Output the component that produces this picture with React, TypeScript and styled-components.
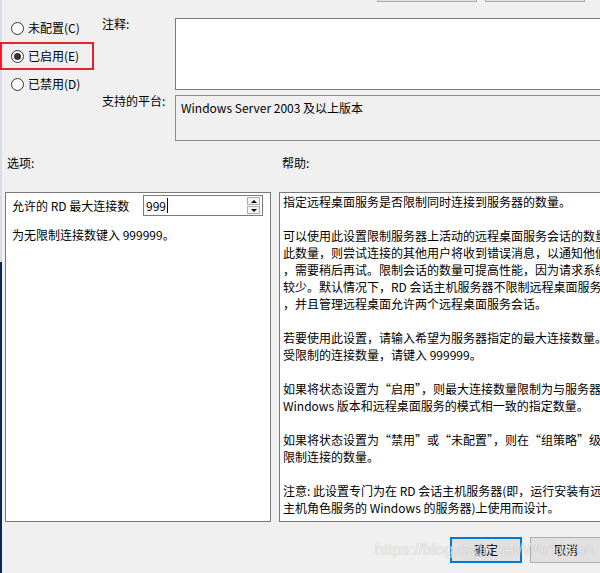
import React from "react";
import styled, { createGlobalStyle, css } from "styled-components";

//////////////////////////////////////////////////////////////////////////////

const GlobalStyle = createGlobalStyle`
  html, body {
    margin: 0;
    padding: 0;
    overflow: hidden;
    background: #f0f0f0;
  }
  body {
    font-family: "Noto Sans CJK SC", "Noto Sans", sans-serif;
    font-size: 12px;
    color: #000;
  }
`;

const SPage = styled.div`
  position: relative;
  width: 600px;
  height: 573px;
  overflow: hidden;
  display: flex;
  flex-direction: column;
  background: linear-gradient(
        to bottom,
        #d9dde3 0,
        #d9dde3 262px,
        #0c2849 262px
      )
      left top / 2px 100% no-repeat,
    #f0f0f0;
`;

const STopBar = styled.div`
  height: 2px;
  flex-shrink: 0;
  display: flex;
  justify-content: flex-end;
  align-items: flex-end;
  gap: 8px;
  padding-right: 15px;
  overflow: hidden;
`;

const STopButton = styled.div`
  width: 100px;
  height: 22px;
  flex-shrink: 0;
  box-sizing: border-box;
  border: 1px solid #adadad;
  background: #e1e1e1;
`;

const SUpper = styled.div`
  display: flex;
  align-items: flex-start;
  flex-shrink: 0;
`;

const SRadioGroup = styled.div`
  width: 94px;
  margin-top: 12px;
  flex-shrink: 0;
  display: flex;
  flex-direction: column;
`;

interface IRowProps {
  highlighted?: boolean;
}

const SRadioRow = styled.div<IRowProps>`
  height: 28px;
  box-sizing: border-box;
  border: 2px solid transparent;
  padding-left: 9px;
  display: flex;
  align-items: center;
  gap: 4px;
  line-height: 14px;

  ${(props) =>
    props.highlighted &&
    css`
      border-color: #e8202a;
    `}
`;

interface ICircleProps {
  checked?: boolean;
}

const SRadioCircle = styled.span<ICircleProps>`
  width: 13px;
  height: 13px;
  box-sizing: border-box;
  border: 1px solid #333;
  border-radius: 50%;
  background: #fff;
  display: flex;
  align-items: center;
  justify-content: center;

  ${(props) =>
    props.checked &&
    css`
      &::after {
        content: "";
        width: 7px;
        height: 7px;
        border-radius: 50%;
        background: #333;
      }
    `}
`;

const SFields = styled.div`
  margin-left: 8px;
  margin-top: 16px;
  width: 520px;
  flex-shrink: 0;
  display: grid;
  grid-template-columns: 73px 1fr;
  grid-template-rows: 72px 46px;
  row-gap: 5px;
`;

const SFieldLabel = styled.div`
  line-height: 12px;
  padding-top: 0;
`;

const SCommentBox = styled.div`
  box-sizing: border-box;
  border: 1px solid #7a7a7a;
  background: #fff;
`;

const SPlatformBox = styled.div`
  box-sizing: border-box;
  border: 1px solid #8a8a8a;
  background: #f0f0f0;
  padding: 4px 5px;
  line-height: 16px;
`;

const SSectionLabels = styled.div`
  margin-top: 14px;
  height: 16px;
  flex-shrink: 0;
  display: grid;
  grid-template-columns: 266px 1fr;
  column-gap: 8px;
  padding-left: 5px;
  line-height: 16px;
`;

interface ILabelProps {
  indent: number;
}

const SSectionLabel = styled.div<ILabelProps>`
  padding-left: ${(props) => props.indent}px;
`;

const SPanels = styled.div`
  margin-top: 21px;
  height: 330px;
  flex-shrink: 0;
  display: grid;
  grid-template-columns: 266px 360px;
  column-gap: 8px;
  padding-left: 5px;
`;

const SOptionsPanel = styled.div`
  box-sizing: border-box;
  border: 1px solid #7a7a7a;
  background: #fff;
  padding: 2px 0 0 6px;
`;

const SOptionRow = styled.div`
  display: flex;
  align-items: center;
  height: 21px;
`;

const SOptionLabel = styled.span`
  width: 131px;
  flex-shrink: 0;
  line-height: 16px;
`;

const SSpinBox = styled.div`
  width: 120px;
  height: 21px;
  box-sizing: border-box;
  border: 1px solid #7a7a7a;
  background: #fff;
  display: flex;
  align-items: center;
  padding-left: 2px;
  line-height: 16px;
`;

const SCaret = styled.span`
  width: 1px;
  height: 15px;
  background: #000;
  margin-left: 1px;
`;

const SSpinButtons = styled.div`
  margin-left: auto;
  margin-right: 2px;
  display: flex;
  flex-direction: column;
  gap: 1px;
`;

interface IArrowProps {
  down?: boolean;
}

const SSpinButton = styled.div<IArrowProps>`
  width: 13px;
  height: 8px;
  box-sizing: border-box;
  border: 1px solid #adadad;
  background: #f4f4f4;
  display: flex;
  align-items: center;
  justify-content: center;

  &::after {
    content: "";
    width: 0;
    height: 0;
    border-left: 3px solid transparent;
    border-right: 3px solid transparent;
    ${(props) =>
      props.down
        ? css`
            border-top: 3px solid #000;
          `
        : css`
            border-bottom: 3px solid #000;
          `}
  }
`;

const SOptionHint = styled.div`
  margin-top: 11px;
  line-height: 16px;
`;

const SHelpPanel = styled.div`
  box-sizing: border-box;
  border: 1px solid #7a7a7a;
  background: #fff;
  padding: 0 0 0 3px;
  overflow: hidden;
  white-space: nowrap;
  line-height: 17px;
`;

const SHelpLine = styled.div`
  height: 17px;
`;

const SButtonBar = styled.div`
  margin-top: 15px;
  padding-left: 450px;
  display: flex;
  gap: 8px;
  flex-shrink: 0;
`;

interface IButtonProps {
  primary?: boolean;
}

const SButton = styled.div<IButtonProps>`
  width: 72px;
  height: 26px;
  flex-shrink: 0;
  box-sizing: border-box;
  border: 1px solid #adadad;
  background: #e1e1e1;
  display: flex;
  align-items: center;
  justify-content: center;
  line-height: 16px;

  ${(props) =>
    props.primary &&
    css`
      border: 2px solid #0078d7;
    `}
`;

const SWatermark = styled.div`
  position: absolute;
  left: 375px;
  top: 541px;
  font-family: "Liberation Sans", Arial, sans-serif;
  font-size: 16px;
  line-height: 18px;
  color: rgba(255, 255, 255, 0.72);
  text-shadow: 0 0 1px rgba(0, 0, 0, 0.28);
  white-space: nowrap;
  pointer-events: none;
`;

////////////////////////////////////////////////////////////////////////////

const radios = [
  { label: "未配置(C)", checked: false },
  { label: "已启用(E)", checked: true },
  { label: "已禁用(D)", checked: false },
];

const helpLines = [
  "指定远程桌面服务是否限制同时连接到服务器的数量。",
  "",
  "可以使用此设置限制服务器上活动的远程桌面服务会话的数量。如果达到",
  "此数量，则尝试连接的其他用户将收到错误消息，以通知他们服务器正忙",
  "，需要稍后再试。限制会话的数量可提高性能，因为请求系统资源的会话",
  "较少。默认情况下，RD 会话主机服务器不限制远程桌面服务会话的数量",
  "，并且管理远程桌面允许两个远程桌面服务会话。",
  "",
  "若要使用此设置，请输入希望为服务器指定的最大连接数量。若要允许不",
  "受限制的连接数量，请键入 999999。",
  "",
  "如果将状态设置为“启用”，则最大连接数量限制为与服务器上运行的",
  "Windows 版本和远程桌面服务的模式相一致的指定数量。",
  "",
  "如果将状态设置为“禁用”或“未配置”，则在“组策略”级别不",
  "限制连接的数量。",
  "",
  "注意: 此设置专门为在 RD 会话主机服务器(即，运行安装有远程桌面会话",
  "主机角色服务的 Windows 的服务器)上使用而设计。",
];

const App = () => {
  return (
    <>
      <GlobalStyle />
      <SPage>
        <STopBar>
          <STopButton />
          <STopButton />
        </STopBar>

        <SUpper>
          <SRadioGroup>
            {radios.map((r) => (
              <SRadioRow key={r.label} highlighted={r.checked}>
                <SRadioCircle checked={r.checked} />
                <span>{r.label}</span>
              </SRadioRow>
            ))}
          </SRadioGroup>

          <SFields>
            <SFieldLabel>注释:</SFieldLabel>
            <SCommentBox />
            <SFieldLabel>支持的平台:</SFieldLabel>
            <SPlatformBox>Windows Server 2003 及以上版本</SPlatformBox>
          </SFields>
        </SUpper>

        <SSectionLabels>
          <SSectionLabel indent={2}>选项:</SSectionLabel>
          <SSectionLabel indent={3}>帮助:</SSectionLabel>
        </SSectionLabels>

        <SPanels>
          <SOptionsPanel>
            <SOptionRow>
              <SOptionLabel>允许的 RD 最大连接数</SOptionLabel>
              <SSpinBox>
                <span>999</span>
                <SCaret />
                <SSpinButtons>
                  <SSpinButton />
                  <SSpinButton down />
                </SSpinButtons>
              </SSpinBox>
            </SOptionRow>
            <SOptionHint>为无限制连接数键入 999999。</SOptionHint>
          </SOptionsPanel>

          <SHelpPanel>
            {helpLines.map((line, i) => (
              <SHelpLine key={i}>{line}</SHelpLine>
            ))}
          </SHelpPanel>
        </SPanels>

        <SButtonBar>
          <SButton primary>确定</SButton>
          <SButton>取消</SButton>
        </SButtonBar>

        <SWatermark>https://blog.csdn.net/Worldsion</SWatermark>
      </SPage>
    </>
  );
};

export default App;
